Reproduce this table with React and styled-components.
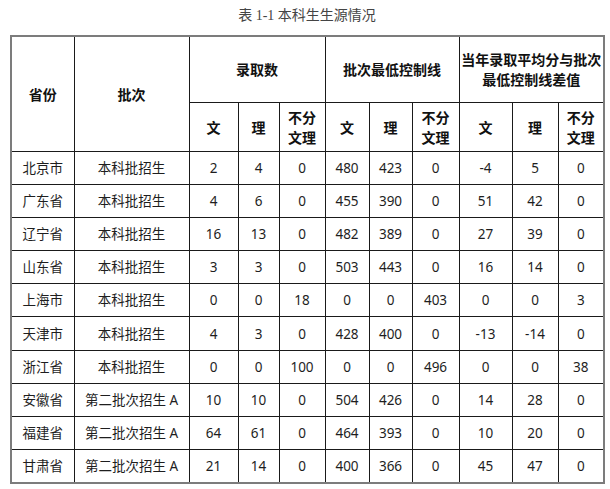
import React from "react";
import styled, { createGlobalStyle } from "styled-components";

const Global = createGlobalStyle`
  html, body { margin: 0; padding: 0; background: #fff; }
  body { font-family: "Noto Sans", "Noto Sans CJK SC", sans-serif; }
`;

const Page = styled.div`
  width: 610px;
  padding: 6px 0 0 10px;
  box-sizing: border-box;
`;

const Title = styled.div`
  width: 594px;
  text-align: center;
  font-family: "Liberation Serif", "Noto Sans CJK SC", serif;
  font-size: 14px;
  line-height: 20px;
  color: #444;
  margin-bottom: 9px;
`;

const Table = styled.table`
  border-collapse: collapse;
  table-layout: fixed;
  width: 594px;
  border: 2px solid #7c7c7c;
  color: #1e1e1e;
`;

const HeadRow = styled.tr`
  height: ${(p) => p.$h}px;
`;

const BodyRow = styled.tr`
  height: 33.2px;
`;

const Th = styled.th`
  border: 1px solid #1a1a1a;
  padding: 0;
  font-family: "Noto Sans CJK SC", sans-serif;
  font-weight: 700;
  font-size: 14px;
  line-height: 20px;
  text-align: center;
  vertical-align: middle;
  color: #111;
`;

const Td = styled.td`
  border: 1px solid #1a1a1a;
  padding: 0;
  font-size: 13.5px;
  line-height: 18px;
  text-align: center;
  vertical-align: middle;
  white-space: nowrap;
`;

const widths = [63, 115, 49, 41, 46, 44, 43, 47, 53, 46, 46];

const rows = [
  ["北京市", "本科批招生", 2, 4, 0, 480, 423, 0, -4, 5, 0],
  ["广东省", "本科批招生", 4, 6, 0, 455, 390, 0, 51, 42, 0],
  ["辽宁省", "本科批招生", 16, 13, 0, 482, 389, 0, 27, 39, 0],
  ["山东省", "本科批招生", 3, 3, 0, 503, 443, 0, 16, 14, 0],
  ["上海市", "本科批招生", 0, 0, 18, 0, 0, 403, 0, 0, 3],
  ["天津市", "本科批招生", 4, 3, 0, 428, 400, 0, -13, -14, 0],
  ["浙江省", "本科批招生", 0, 0, 100, 0, 0, 496, 0, 0, 38],
  ["安徽省", "第二批次招生 A", 10, 10, 0, 504, 426, 0, 14, 28, 0],
  ["福建省", "第二批次招生 A", 64, 61, 0, 464, 393, 0, 10, 20, 0],
  ["甘肃省", "第二批次招生 A", 21, 14, 0, 400, 366, 0, 45, 47, 0],
];

const Sub = () => (
  <>
    <Th>文</Th>
    <Th>理</Th>
    <Th>
      不分
      <br />
      文理
    </Th>
  </>
);

export default function App() {
  return (
    <>
      <Global />
      <Page>
        <Title>表 1-1 本科生生源情况</Title>
        <Table>
          <colgroup>
            {widths.map((w, i) => (
              <col key={i} style={{ width: w }} />
            ))}
          </colgroup>
          <thead>
            <HeadRow $h={66}>
              <Th rowSpan={2}>省份</Th>
              <Th rowSpan={2}>批次</Th>
              <Th colSpan={3}>录取数</Th>
              <Th colSpan={3}>批次最低控制线</Th>
              <Th colSpan={3}>
                当年录取平均分与批次
                <br />
                最低控制线差值
              </Th>
            </HeadRow>
            <HeadRow $h={49}>
              <Sub />
              <Sub />
              <Sub />
            </HeadRow>
          </thead>
          <tbody>
            {rows.map((r) => (
              <BodyRow key={r[0]}>
                {r.map((v, i) => (
                  <Td key={i}>{v}</Td>
                ))}
              </BodyRow>
            ))}
          </tbody>
        </Table>
      </Page>
    </>
  );
}
